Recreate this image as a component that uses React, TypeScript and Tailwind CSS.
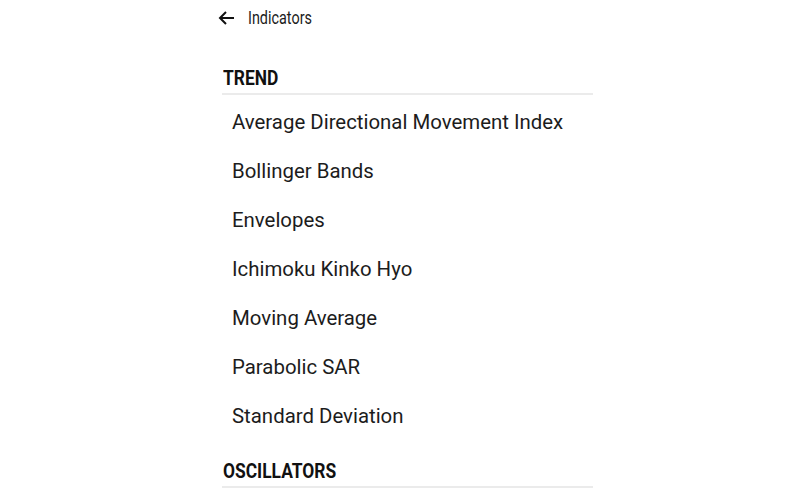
const sections = [
  {
    title: "TREND",
    items: [
      "Average Directional Movement Index",
      "Bollinger Bands",
      "Envelopes",
      "Ichimoku Kinko Hyo",
      "Moving Average",
      "Parabolic SAR",
      "Standard Deviation",
    ],
  },
  { title: "OSCILLATORS", items: [] as string[] },
];

const BackArrow = () => (
  <svg width="17" height="14" viewBox="0 0 17 14" fill="none" stroke="#111" strokeWidth="2">
    <path d="M16 7H2" />
    <path d="M8 1L2 7l6 6" />
  </svg>
);

export default function App() {
  return (
    <main className="w-[800px] h-[500px] overflow-hidden bg-white text-[#1c1c1c] font-['Roboto',sans-serif]">
      <div className="ml-[222px] w-[371px] flex flex-col">
        <header className="h-[36px] flex items-center gap-[13px] -ml-[4px]">
          <BackArrow />
          <span className="text-[18px] leading-none scale-x-[0.8] origin-left inline-block">
            Indicators
          </span>
        </header>

        {sections.map((section, i) => (
          <section key={section.title} className="flex flex-col">
            <h2
              className={`${i === 0 ? "pt-[31px]" : "pt-[18px]"} pl-[1px] pb-[3px] border-b-2 border-[#ebebeb] text-[20px] leading-[23px] font-bold text-[#111]`}
            >
              <span className="inline-block scale-x-[0.87] origin-left">{section.title}</span>
            </h2>
            {section.items.length > 0 && (
              <ul className="flex flex-col pt-[3px] pb-[1px]">
                {section.items.map((item) => (
                  <li key={item} className="h-[49px] flex items-center pl-[10px] text-[20.4px]">
                    {item}
                  </li>
                ))}
              </ul>
            )}
          </section>
        ))}
      </div>
    </main>
  );
}
